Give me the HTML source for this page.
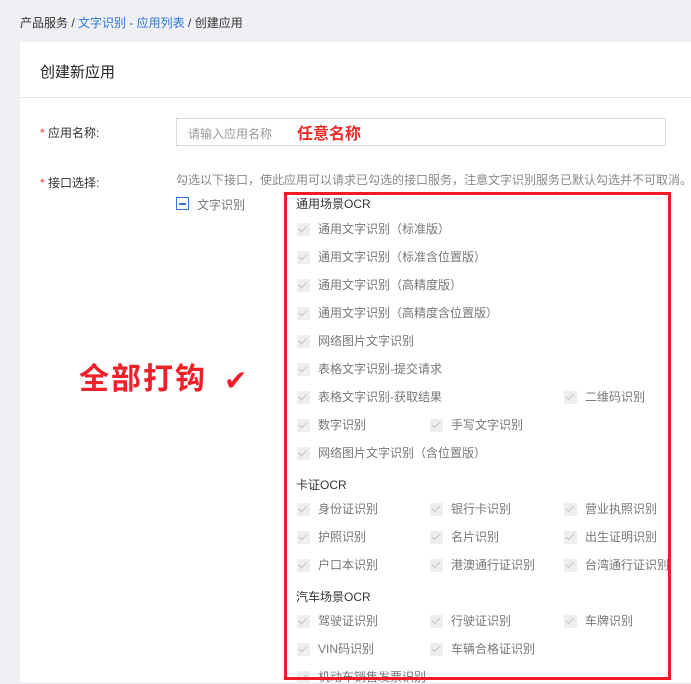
<!DOCTYPE html>
<html><head><meta charset="utf-8"><style>
body{margin:0;width:691px;height:682px;overflow:hidden;background:#eef0f3;font-family:"Liberation Sans","Noto Sans CJK SC",sans-serif;position:relative}
.a{position:absolute;white-space:nowrap}
.card{position:absolute;left:20px;top:42px;width:671px;height:640px;background:#fff}
.cb{position:absolute;width:13px;height:13px;background:#eeeeee;border-radius:1px}
.cb:after{content:"";position:absolute;left:4px;top:1px;width:3px;height:7px;border:solid #c4c4c4;border-width:0 1.5px 1.5px 0;transform:rotate(45deg)}
.it{position:absolute;font-size:12px;color:#777;line-height:14px;white-space:nowrap}
.h{position:absolute;font-size:12px;color:#333;left:296px;line-height:14px}
</style></head><body>
<div class="a" style="left:20px;top:14px;font-size:12px;color:#333">产品服务 / <span style="color:#2b78d8">文字识别 - 应用列表</span> / 创建应用</div>
<div class="card"></div>
<div class="a" style="left:40px;top:61px;font-size:15px;color:#222">创建新应用</div>
<div class="a" style="left:20px;top:97px;width:671px;height:1px;background:#e6e6e6"></div>
<div class="a" style="left:40px;top:124px;font-size:12px;color:#333"><span style="color:#e33">*</span> 应用名称:</div>
<div class="a" style="left:176px;top:118px;width:488px;height:26px;border:1px solid #d9d9d9"></div>
<div class="a" style="left:188px;top:125px;font-size:12px;color:#999">请输入应用名称</div>
<div class="a" style="left:297px;top:120px;font-size:16px;color:#f02a2a;font-weight:bold">任意名称</div>
<div class="a" style="left:40px;top:174px;font-size:12px;color:#333"><span style="color:#e33">*</span> 接口选择:</div>
<div class="a" style="left:176px;top:171px;font-size:12px;color:#888">勾选以下接口，使此应用可以请求已勾选的接口服务，注意文字识别服务已默认勾选并不可取消。</div>
<div class="a" style="left:176px;top:197px;width:11px;height:11px;border:1px solid #2b78d8"><div style="position:absolute;left:2px;top:5px;width:7px;height:1.5px;background:#2b78d8"></div></div>
<div class="a" style="left:197px;top:196px;font-size:12px;color:#777">文字识别</div>
<div class="a" style="left:79px;top:362px;font-size:30px;color:#f0202a;font-weight:bold;letter-spacing:2px;line-height:36px">全部打钩</div>
<div class="a" style="left:224px;top:364px;font-size:28px;color:#f0202a;line-height:34px">✔</div>

<div class="h" style="top:197px">通用场景OCR</div>
<div class="cb" style="left:297px;top:223px"></div><div class="it" style="left:318px;top:222px">通用文字识别（标准版）</div>
<div class="cb" style="left:297px;top:251px"></div><div class="it" style="left:318px;top:250px">通用文字识别（标准含位置版）</div>
<div class="cb" style="left:297px;top:279px"></div><div class="it" style="left:318px;top:278px">通用文字识别（高精度版）</div>
<div class="cb" style="left:297px;top:307px"></div><div class="it" style="left:318px;top:306px">通用文字识别（高精度含位置版）</div>
<div class="cb" style="left:297px;top:335px"></div><div class="it" style="left:318px;top:334px">网络图片文字识别</div>
<div class="cb" style="left:297px;top:363px"></div><div class="it" style="left:318px;top:362px">表格文字识别-提交请求</div>
<div class="cb" style="left:297px;top:391px"></div><div class="it" style="left:318px;top:390px">表格文字识别-获取结果</div>
<div class="cb" style="left:564px;top:391px"></div><div class="it" style="left:585px;top:390px">二维码识别</div>
<div class="cb" style="left:297px;top:419px"></div><div class="it" style="left:318px;top:418px">数字识别</div>
<div class="cb" style="left:430px;top:419px"></div><div class="it" style="left:451px;top:418px">手写文字识别</div>
<div class="cb" style="left:297px;top:447px"></div><div class="it" style="left:318px;top:446px">网络图片文字识别（含位置版）</div>
<div class="h" style="top:478px">卡证OCR</div>
<div class="cb" style="left:297px;top:503px"></div><div class="it" style="left:318px;top:502px">身份证识别</div>
<div class="cb" style="left:430px;top:503px"></div><div class="it" style="left:451px;top:502px">银行卡识别</div>
<div class="cb" style="left:564px;top:503px"></div><div class="it" style="left:585px;top:502px">营业执照识别</div>
<div class="cb" style="left:297px;top:531px"></div><div class="it" style="left:318px;top:530px">护照识别</div>
<div class="cb" style="left:430px;top:531px"></div><div class="it" style="left:451px;top:530px">名片识别</div>
<div class="cb" style="left:564px;top:531px"></div><div class="it" style="left:585px;top:530px">出生证明识别</div>
<div class="cb" style="left:297px;top:559px"></div><div class="it" style="left:318px;top:558px">户口本识别</div>
<div class="cb" style="left:430px;top:559px"></div><div class="it" style="left:451px;top:558px">港澳通行证识别</div>
<div class="cb" style="left:564px;top:559px"></div><div class="it" style="left:585px;top:558px">台湾通行证识别</div>
<div class="h" style="top:590px">汽车场景OCR</div>
<div class="cb" style="left:297px;top:615px"></div><div class="it" style="left:318px;top:614px">驾驶证识别</div>
<div class="cb" style="left:430px;top:615px"></div><div class="it" style="left:451px;top:614px">行驶证识别</div>
<div class="cb" style="left:564px;top:615px"></div><div class="it" style="left:585px;top:614px">车牌识别</div>
<div class="cb" style="left:297px;top:643px"></div><div class="it" style="left:318px;top:642px">VIN码识别</div>
<div class="cb" style="left:430px;top:643px"></div><div class="it" style="left:451px;top:642px">车辆合格证识别</div>
<div class="cb" style="left:297px;top:671px"></div><div class="it" style="left:318px;top:670px">机动车销售发票识别</div>
<div class="a" style="left:284px;top:192px;width:381px;height:482px;border:3px solid #ee1c25"></div>
</body></html>
